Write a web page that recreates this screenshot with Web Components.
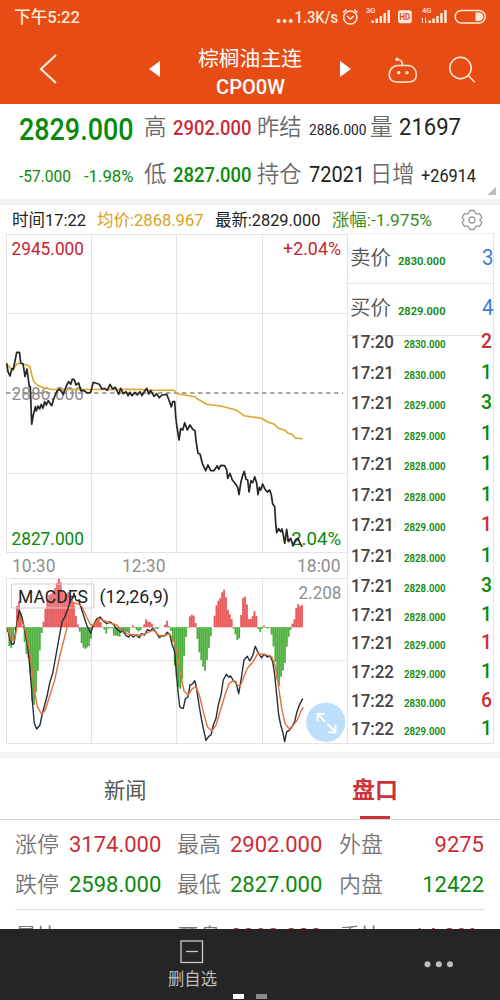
<!DOCTYPE html>
<html lang="zh-CN">
<head>
<meta charset="utf-8">
<title>棕榈油主连 CPO0W</title>
<style>
  html, body { margin: 0; height: 1000px; overflow: hidden; background: #fff; }
  body {
    font-family: Roboto, "Noto Sans CJK SC", sans-serif;
    color: #222;
    --up: #cb2c36;
    --down: #0a8a0a;
    --label: #6a6a6a;
    --line: #e4e4e4;
  }
</style>
</head>
<body>

<trade-app></trade-app>

<template id="status-bar-template">
  <style>
    :host { display: flex; height: 35px; padding: 0 14px; align-items: center; justify-content: space-between; color: #ffe9d8; }
    svg { display: block; fill: none; stroke: currentColor; }
    fit-label { margin-top: 1px; }
    .solid { fill: currentColor; stroke: none; }
    text { fill: currentColor; stroke: none; font-weight: 500; }
  </style>
  <fit-label s="16.5" w="66" weight="500">下午5:22</fit-label>
  <svg width="212" height="35" viewBox="274 0 212 35">
    <g class="solid">
      <circle cx="278.5" cy="21" r="2"/><circle cx="284.6" cy="21" r="2"/><circle cx="290.7" cy="21" r="2"/>
    </g>
    <text x="294.5" y="22.5" font-size="16" textLength="43.5" lengthAdjust="spacingAndGlyphs">1.3K/s</text>
    <g stroke-width="1.5">
      <circle cx="350.3" cy="17.5" r="6.6"/>
      <path d="M343 12.5l3.4-2.8M357.6 12.5l-3.4-2.8M347 16l3.3 3 3.6-3"/>
    </g>
    <text x="366" y="13" font-size="7.5" textLength="9.5" lengthAdjust="spacingAndGlyphs">3G</text>
    <path class="solid" d="M371.5 20.5h2.5v2.5h-2.5zM375.5 18.5h2.5v4.5h-2.5zM379.5 16h2.5v7h-2.5zM383.5 13h2.5v10h-2.5zM387.5 10h2.5v13h-2.5z"/>
    <rect class="solid" x="398" y="10.3" width="13.8" height="13" rx="2.5"/>
    <text x="399.6" y="20.2" font-size="8.8" textLength="10.5" lengthAdjust="spacingAndGlyphs" style="fill:#e64c14;font-weight:700">HD</text>
    <text x="422" y="13" font-size="7.5" textLength="9.5" lengthAdjust="spacingAndGlyphs">4G</text>
    <path d="M422.5 23v-5l-1 1.2M425.5 17.5v5l1-1.2" stroke-width="1"/>
    <path class="solid" d="M428.5 20.5h2.5v2.5h-2.5zM432.3 18.5h2.5v4.5h-2.5zM436.2 16h2.5v7h-2.5zM440.2 13h2.5v10h-2.5zM444.2 10h2.5v13h-2.5z"/>
    <rect x="455.2" y="10.5" width="30" height="12.5" rx="6.2" stroke-width="1.5"/>
    <path class="solid" d="M475.5 12.5h3.5a4.2 4.2 0 0 1 0 8.5h-3.5z"/>
  </svg>
</template>

<template id="title-bar-template">
  <style>
    :host { display: grid; grid-template-columns: 140px 220px 140px; height: 68.5px; color: #fff; }
    svg { display: block; fill: none; stroke: #ffeadb; }
    .title { display: flex; justify-content: space-between; align-items: center; padding: 0 9px; }
    .name { display: flex; flex-direction: column; align-items: center; gap: 7.5px; margin-top: 7.5px; }
    .tri { fill: #fff; stroke: none; }
  </style>
  <svg width="140" height="68" viewBox="0 35 140 68"><path d="M56 55L41 69l15 14" stroke-width="2.2"/></svg>
  <div class="title">
    <svg width="11" height="16" viewBox="0 0 11 16"><path class="tri" d="M0 8L11 0v16z"/></svg>
    <div class="name">
      <fit-label s="20.8" w="104">棕榈油主连</fit-label>
      <fit-label s="20" w="69" weight="500">CPO0W</fit-label>
    </div>
    <svg width="11" height="16" viewBox="0 0 11 16"><path class="tri" d="M11 8L0 0v16z"/></svg>
  </div>
  <svg width="140" height="68" viewBox="360 35 140 68" stroke-width="1.5">
    <path d="M398 65.5h10c5 0 8.3 4 8.3 9 0 4.5-2 7-6 7.3-5 .5-10 .5-15 0-4-.3-6-2.8-6-7.3 0-5 3.7-9 8.7-9zM402.5 65.5c0-3.500-1.500-6-5-6"/>
    <g fill="#ffeadb" stroke="none">
      <circle cx="397" cy="59.3" r="1.7"/>
      <circle cx="398.7" cy="72.8" r="1.7"/>
      <circle cx="407" cy="72.8" r="1.7"/>
    </g>
    <circle cx="460.5" cy="68" r="10.7"/><path d="M468.3 75.5l6.5 6.7"/>
  </svg>
</template>

<template id="quote-panel-template">
  <style>
    :host { display: flex; position: relative; height: 101.5px; border-bottom: 6px solid #f3f3f3; padding-left: 19px; }
    .last { width: 125px; color: var(--down); padding-top: 11.5px; }
    .change { display: flex; margin-top: 22px; }
    .row { display: flex; align-items: baseline; height: 46.7px; }
    .rows { padding-top: 12.8px; }
    .key { color: var(--label); }
    .up { color: var(--up); }
    .down { color: var(--down); }
    .corner { position: absolute; right: 4px; bottom: 4px; width: 9px; height: 8px; background: #bdbdbd; clip-path: polygon(100% 0, 100% 100%, 0 100%); }
  </style>
  <div class="last">
    <fit-label s="30.5" w="114.5" weight="500">2829.000</fit-label>
    <div class="change">
      <fit-label s="16.8" w="52">-57.000</fit-label>
      <fit-label s="16.8" w="49.5" gap="13">-1.98%</fit-label>
    </div>
  </div>
  <div class="rows">
    <div class="row">
      <fit-label class="key" s="22.5" w="22.5" weight="350">高</fit-label>
      <fit-label class="up" s="20" w="78.5" gap="6.5" weight="500">2902.000</fit-label>
      <fit-label class="key" s="22.5" w="44.5" gap="5.5" weight="350">昨结</fit-label>
      <fit-label s="14.8" w="57.5" gap="7">2886.000</fit-label>
      <fit-label class="key" s="22.5" w="22.5" gap="3.5" weight="350">量</fit-label>
      <fit-label s="23" w="62" gap="7">21697</fit-label>
    </div>
    <div class="row">
      <fit-label class="key" s="22.5" w="22.5" weight="350">低</fit-label>
      <fit-label class="down" s="20" w="78.5" gap="6.5" weight="500">2827.000</fit-label>
      <fit-label class="key" s="22.5" w="44.5" gap="5.5" weight="350">持仓</fit-label>
      <fit-label s="22" w="56" gap="7">72021</fit-label>
      <fit-label class="key" s="22.5" w="44.5" gap="5" weight="350">日增</fit-label>
      <fit-label s="17.8" w="55" gap="7">+26914</fit-label>
    </div>
  </div>
  <i class="corner"></i>
</template>

<template id="info-line-template">
  <style>
    :host { display: flex; height: 28px; padding: 7px 0 0 12px; align-items: baseline; }
    .avg { color: #d9a21b; }
    .pct { color: #3c8c28; }
    svg { flex: none; align-self: flex-start; margin: -4px 0 0 28px; fill: none; stroke: #9a9a9a; stroke-width: 1.3; }
  </style>
  <fit-label s="16.8" w="74">时间17:22</fit-label>
  <fit-label class="avg" s="16.8" w="106.5" gap="11">均价:2868.967</fit-label>
  <fit-label s="16.8" w="105.5" gap="11.5">最新:2829.000</fit-label>
  <fit-label class="pct" s="16.8" w="100" gap="11.5">涨幅:-1.975%</fit-label>
  <svg width="24" height="24" viewBox="-12 -12 24 24">
    <path stroke-linejoin="round" d="M-2.3-9.5h4.6l.8 2.5 2 1.2 2.6-.6 2.3 4-1.8 1.9v1l1.8 1.9-2.3 4-2.6-.6-2 1.2-.8 2.5h-4.6l-.8-2.5-2-1.2-2.6.6-2.3-4 1.8-1.9v-1l-1.8-1.9 2.3-4 2.6.6 2-1.2z"/>
    <circle r="3"/>
  </svg>
</template>

<template id="price-chart-template">
  <style>
    :host { display: block; width: 347px; height: 519px; }
    svg { display: block; }
    text { font-size: 17.5px; }
    .grid { stroke: var(--line); fill: none; }
    .axis { fill: #8f8f8f; }
    polyline { fill: none; stroke-linejoin: round; }
  </style>
  <svg width="347" height="519" viewBox="0 233 347 519">
    <path class="grid" d="M6.5 234v318.5M91.5 234v318.5M176.5 234v318.5M262.5 234v318.5M6 234.5h341M6 313.5h341M6 473.5h341M6 552.5h341M6.5 578v166M91.5 578v166M176.5 578v166M262.5 578v166M6 578.5h341M6 660.5h341M6 743.5h341"/>
    <text x="11.5" y="255" textLength="72.5" lengthAdjust="spacingAndGlyphs" fill="#c8232f">2945.000</text>
    <text x="283" y="255" textLength="58" lengthAdjust="spacingAndGlyphs" fill="#c8232f">+2.04%</text>
    <text class="axis" x="11.5" y="399.5" textLength="72.5" lengthAdjust="spacingAndGlyphs">2886.000</text>
    <text x="11.5" y="544.5" textLength="72.5" lengthAdjust="spacingAndGlyphs" fill="#0a8a0a">2827.000</text>
    <text x="286" y="544.5" textLength="55" lengthAdjust="spacingAndGlyphs" fill="#0a8a0a">-2.04%</text>
    <text class="axis" x="12" y="571.5" textLength="43.5" lengthAdjust="spacingAndGlyphs">10:30</text>
    <text class="axis" x="122" y="571.5" textLength="43.5" lengthAdjust="spacingAndGlyphs">12:30</text>
    <text class="axis" x="297" y="571.5" textLength="43.5" lengthAdjust="spacingAndGlyphs">18:00</text>
    <text class="axis" x="298.5" y="599" textLength="43" lengthAdjust="spacingAndGlyphs">2.208</text>
    <path d="M6 393H343" stroke="#8a8a8a" stroke-width="1.3" stroke-dasharray="4.5 3.5"/>
    <polyline id="avg" stroke="#d9a92b" stroke-width="1.6"/>
    <polyline id="price" stroke="#262626" stroke-width="1.7"/>
    <path id="redFill" fill="#f08a8a"/>
    <path id="greenFill" fill="#8fd083"/>
    <path id="red" stroke="#e8595c" stroke-width="1.45"/>
    <path id="green" stroke="#4bad3b" stroke-width="1.45"/>
    <rect x="11.5" y="584" width="82.5" height="24" rx="2" fill="#fff" fill-opacity=".12" stroke="#d2d2d2" stroke-width="1.2"/>
    <text x="18" y="603" textLength="70" lengthAdjust="spacingAndGlyphs" fill="#222">MACDFS</text>
    <text x="99.5" y="603" textLength="69.5" lengthAdjust="spacingAndGlyphs" fill="#222">(12,26,9)</text>
    <polyline id="dif" stroke="#23303a" stroke-width="1.4"/>
    <polyline id="dea" stroke="#e2703c" stroke-width="1.4"/>
    <circle cx="325.8" cy="722.3" r="19.7" fill="#b9ddfb" fill-opacity=".93"/>
    <path d="M325 721.5l-7.5-7.5M317.5 721v-7h7.5M327.5 724l8 8M335.5 725v7.2h-7.5" fill="none" stroke="#fff" stroke-width="1.9"/>
  </svg>
</template>

<template id="trade-list-template">
  <style>
    :host { display: block; width: 147px; height: 511px; border: 1px solid var(--line); border-top-color: #eee; }
    .quote { display: flex; align-items: baseline; height: 50px; padding: 12.5px 0 0 2px; border-bottom: 1px solid var(--line); }
    .quote + .quote { height: 52px; }
    .quote .key { color: #555; }
    .trade { display: flex; align-items: baseline; height: 30.5px; padding: 0 1px 0 2.5px; }
    .quote + .trade { margin-top: -4.8px; }
    .late { height: 28.6px; }
    .time { color: #444; }
    .price, .down { color: #0b8a0b; }
    .vol { margin-left: auto; }
    .blue { color: #3d7fd6; }
    .up { color: var(--up); }
  </style>
  <div id="rows"></div>
</template>

<template id="tab-bar-template">
  <style>
    :host { display: grid; grid-template-columns: 1fr 1fr; height: 68px; border-top: 6px solid #f3f3f3; border-bottom: 1px solid #d6d6d6; }
    div { display: flex; flex-direction: column; align-items: center; }
    .news { color: #555; padding-top: 21.5px; }
    .book { color: #cc3338; padding-top: 20.5px; }
    i { width: 30px; height: 3px; background: #cc3338; margin-top: auto; }
  </style>
  <div class="news"><fit-label s="21.5" w="42.5">新闻</fit-label></div>
  <div class="book"><fit-label s="23" w="46" weight="700">盘口</fit-label><i></i></div>
</template>

<template id="stats-grid-template">
  <style>
    :host { display: block; height: 108.7px; overflow: hidden; padding: 5px 15px 0; }
    .row { display: grid; grid-template-columns: 54px 108px 53px 109px 54px 1fr; height: 40.3px; align-items: center; font-size: 22px; line-height: 26px; }
    .row span:nth-child(odd) { color: #757575; font-weight: 350; }
    .row span:last-child { text-align: right; margin-right: 1px; }
    .row:last-child { margin-top: 3px; border-top: 1px solid #dcdcdc; height: 55px; }
    .up { color: var(--up); }
    .down { color: var(--down); }
  </style>
  <div class="row"><span>涨停</span><span class="up">3174.000</span><span>最高</span><span class="up">2902.000</span><span>外盘</span><span class="up">9275</span></div>
  <div class="row"><span>跌停</span><span class="down">2598.000</span><span>最低</span><span class="down">2827.000</span><span>内盘</span><span class="down">12422</span></div>
  <div class="row"><span>量比</span><span></span><span>开盘</span><span class="up">2898.000</span><span>委比</span><span class="up">14.29%</span></div>
</template>

<template id="bottom-bar-template">
  <style>
    :host { display: grid; grid-template-columns: 384px 1fr; height: 71.3px; background: #252525; color: #bdbdbd; position: relative; }
    .remove { display: flex; flex-direction: column; align-items: center; padding-top: 11px; gap: 8px; }
    svg { display: block; }
    .pager { position: absolute; left: 233px; bottom: 1px; display: flex; gap: 12px; }
    .pager i { width: 11px; height: 5px; background: #8a8a8a; }
    .pager i:first-child { background: #fff; }
  </style>
  <div class="remove">
    <svg width="24" height="24" fill="none" stroke="#c9c9c9" stroke-width="1.3"><rect x="1" y="1" width="21.5" height="21.5"/><path d="M6 11.5h12"/></svg>
    <fit-label s="16.5" w="49">删自选</fit-label>
  </div>
  <svg width="116" height="71" fill="#bdbdbd"><circle cx="43.5" cy="35.2" r="3"/><circle cx="54.8" cy="35.2" r="3"/><circle cx="66" cy="35.2" r="3"/></svg>
  <div class="pager"><i></i><i></i></div>
</template>

<template id="trade-app-template">
  <style>
    :host { display: flex; flex-direction: column; width: 500px; height: 1000px; background: #fff; }
    header { background: #e64c14; }
    .market { display: flex; height: 519px; }
  </style>
  <header>
    <status-bar></status-bar>
    <title-bar></title-bar>
  </header>
  <quote-panel></quote-panel>
  <info-line></info-line>
  <div class="market">
    <price-chart></price-chart>
    <trade-list></trade-list>
  </div>
  <tab-bar></tab-bar>
  <stats-grid></stats-grid>
  <bottom-bar></bottom-bar>
</template>

<script>
  (function (document, window) {

    class TemplateElement extends HTMLElement {
      connectedCallback() {
        if (this.shadowRoot) {
          return;
        }
        const template = document.querySelector(`#${this.localName}-template`);
        const shadowRoot = this.attachShadow({ mode: 'open' });
        shadowRoot.innerHTML = '<style>:host, * { box-sizing: border-box; } :host { flex: none; }</style>';
        shadowRoot.appendChild(document.importNode(template.content, true));
        this.render(shadowRoot);
      }

      render() {}
    }

    // One line of text squeezed to a given width: s = font size, w = width, gap = left margin
    class FitLabel extends HTMLElement {
      connectedCallback() {
        if (this.shadowRoot) {
          return;
        }
        const size = this.getAttribute('s');
        const width = this.getAttribute('w');
        const shadowRoot = this.attachShadow({ mode: 'open' });
        shadowRoot.innerHTML = `
          <style>
            :host {
              display: inline-block; flex: none; white-space: nowrap;
              width: ${width}px; margin-left: ${this.getAttribute('gap') || 0}px;
              font-size: ${size}px; line-height: ${size}px;
              font-weight: ${this.getAttribute('weight') || 400};
            }
            span { display: inline-block; transform-origin: 0 0; }
          </style>
          <span><slot></slot></span>`;
        const span = shadowRoot.querySelector('span');
        const natural = span.getBoundingClientRect().width;
        if (natural) {
          span.style.transform = `scaleX(${width / natural})`;
        }
      }
    }

    const price = '6.7,363.3 8,371.7 10,376 12,368.5 13.3,369.5 16.7,352.3 19.5,352.3 20.7,363 23,363.7 25,376.5 27,369 29.3,386.7 30.3,386.7 31.7,424.3 33.3,415 35.3,406.7 36.3,411 38,406 39.7,409 41.3,404.3 43,408.3 44.7,401.7 46.3,405 48.3,400.7 51.7,405.7 54,398.3 56.7,391.7 59.3,389 63.3,394.3 66.7,385 68.7,381.7 70.7,384.3 72.3,379 74.3,379.7 76,385 78.7,383 81,391 83.3,390.3 87.3,393 90.7,392.3 93.3,382.3 99.3,384.3 102,389 104.7,388.3 107.3,390.3 110,384.3 112.7,389 115.3,387.3 118.7,394.3 120.7,388.3 123.3,393.7 126,391.7 128,395.7 130,392.3 132,395.7 134.7,392.3 137.3,395 140,391.7 142,395.7 144.7,391 146.7,388.3 148.7,394 150.7,390.3 154,396.3 156.7,393.7 159.3,397.7 162,395 166.7,394.3 169.3,401 171.3,407 172.7,401.7 174.7,401.7 175.7,416.7 176.7,425 179,440 180.7,428.7 182.7,430 184.7,422.7 187.3,430 190,425 192.7,429.3 195,430.7 196,440.7 198,453.3 200,454 202.3,463.3 205.7,470.7 208,465 210.7,470.7 214,470.7 217.3,465.7 218.7,469.3 220.7,465.3 224.7,465.7 226.7,470 227.7,478.3 230,473.3 232.3,480 235,483.3 237.7,487.3 239,494.7 241,481.7 242.7,475.3 244.3,471.3 246,479.3 247.7,480 249,492 251,480.7 252.7,482.7 254.7,476.7 256.7,483.3 258,494.7 259.3,487.3 260.7,490 262.7,484 264.7,488.7 267.3,492 269.7,490 271.3,494.7 272.7,504 274.7,506.7 275.7,523.3 276.7,532.7 278.7,528.7 280.7,531.7 282,529 283.3,535 284.7,543.3 286.7,529.3 288.3,541.7 290.7,538.3 293,546 295.3,540 298,538.3 300,543.3 302.3,546.7';

    const average = '6.7,363.5 10,367.5 12,369.5 14,368 17,364 20,363.5 27,365 30,367 32,376 34,382 38,385.5 44,388 52,389.5 91,389.5 141,389.3 145,390.3 174,390.3 178,394 195,396.7 198,399.3 206.7,404.3 221.7,406.3 236.7,410.3 244,415.7 261.7,418.3 267.3,421.7 274.3,424.3 278.3,428.3 285,430.3 288.3,433.3 291.7,434 295.3,438 302.7,438.7';

    const dif = '7.3,627.7 9.3,636.7 11.7,644.3 14,643.7 16,628.3 19.3,610.3 22,617 24.3,628.3 26.7,640 28.7,655 30.7,678.3 32.7,705 34.3,723.3 36.7,729 40,725 42,715 44.7,705 47.3,695 50,681.7 52.7,673.3 56,655 58.7,640 62,622 65,616.7 68,608.3 70.7,600 72.7,598.3 74,593.3 76,600 78.7,601 81.3,608.3 84,616.7 86.7,625 90.7,633.3 93.3,625 96.7,619 100,617 103.3,621 106.7,623.7 110,621.7 113.3,624.3 116.7,629 120.7,632.3 123.3,630.3 126,635.7 128.7,637 130.7,634.3 133.3,637 136,635 139.3,637.7 141.3,633.7 144.7,635 147.3,629.7 150,631 152.7,628.3 156,632.3 159.3,637.7 162,635.7 164.7,635.7 167.3,632.3 170,635 172,644.3 174.7,651.7 176,668.3 178,691.7 179.7,706.7 181.7,708.3 183.3,708.3 185.3,699 188,696.7 190,685 192,684.3 194.7,680.7 196.3,686.7 198,698.3 200.7,715 203.3,728.3 206,740.3 208.7,736.3 211,735 213.3,725 216,718.3 218.3,705 221,695 223.3,680 226.3,674.3 228.7,677 230.7,676 233.3,680.7 236,682.3 238.7,693.7 241.3,678.3 244,660 247.3,656.3 249.7,661 252.7,655.7 255.3,646.3 257.3,651 260,655.7 261.7,657.7 264,654.3 267.3,657 270,656 272.7,661.7 274.7,675 276.7,695 278.7,715 280.7,725 282.7,731.7 284.7,741.7 286.7,731.7 289.3,730.3 292,726.7 294.7,721.7 297,711.7 299.7,704.3 302.7,698.7';

    const dea = '7.3,627 11.3,640 14.7,640 18,621 20.7,617.7 26,632.3 30.7,658.3 34.7,691.7 37.3,706.7 41.7,714.3 45.3,710 50,695 54.7,680 60,655 66,631.7 70.7,613.3 74,602.3 78.7,604.3 82,606.7 86,615.7 90.7,625 94,625 98.7,618.3 103.3,620.3 110,623 116.7,625 121.7,629.7 128.3,634.3 135,635 141.7,635 148.3,632.3 153.3,630 158.3,635 163.3,636.3 169.3,633.7 174,640 177.3,655 180.7,675 184,691 188,695 192,689 196,686.7 199.3,695 203.3,711.7 207.3,726.7 212,731 216,725 220,711.7 225,695 229.3,683.3 233.3,680.7 236.7,684.3 240,686.7 242.7,680 247.3,668.3 252.7,662.3 257.3,654.3 265,654.3 271.7,656.7 275,665 278.3,685 281.7,708.3 285,723.3 289.3,729 293.3,725 297.3,720 300.7,711.7 303.3,707';

    // Histogram outline: x and height over (or under) the zero line
    const histogram = [
      [7, 0], [8.3, -12], [10.3, -24], [12, -18], [14, -10], [15.5, 0], [16.5, 17], [18, 30], [20, 22], [22, 2], [23.5, 0],
      [24.3, -12], [25.7, -25], [28.3, -30], [30, -42], [32.3, -75], [34, -78], [36, -65], [37.3, -50], [39.3, -28], [41.3, -8], [42.7, 0],
      [44, 8], [46, 22], [48.7, 32], [52, 34], [54, 36], [56.7, 44], [59, 49], [61, 44], [62.7, 36], [65, 32], [68.3, 35], [70.7, 33], [73.3, 26], [75.3, 14], [78, 2],
      [79, 0], [80, -6], [82, -18], [84.7, -22], [87.3, -20], [90, -18], [92, -6], [93, 1], [96, 8], [98.7, 9], [101.3, 4], [102.7, 0],
      [104, -1], [106, -7], [108.3, -1], [113, -1], [114, -9], [116.7, -8], [119.3, -10], [121.3, -4], [124, -7], [126.7, -4], [129.3, -6], [130.7, 0],
      [132.7, 2], [134, 0], [138.3, -4], [140, -4], [142, 0], [144, 2], [146.7, 9], [148.7, 4], [150.7, 6], [152.7, 2], [154, 0], [156.7, -2], [160, 0],
      [164, 0], [167.3, 7], [169.3, 0], [171, -4], [173, -16], [175, -42], [177, -52], [179.3, -64], [181.7, -58], [183.3, -40], [185.3, -15], [187.3, -2],
      [188.5, 0], [189, 9], [191, 13], [192.7, 12], [195, 11], [196, 0], [196.7, -2], [198, -18], [200, -28], [202.7, -38], [204.7, -44], [206, -42], [207.3, -30], [209.3, -18], [211.3, -6], [212.7, 0],
      [214, 8], [216, 20], [217.7, 26], [220, 28], [221.7, 34], [224, 38], [226, 30], [227.7, 18], [229.3, 14], [231.3, 10], [233.3, 0],
      [234.7, -5], [236.7, -10], [238.7, -17], [240, -4], [240.7, 6], [242, 22], [244, 35], [246, 26], [247.7, 20], [249, 6], [251.3, 9], [253.3, 12], [255.7, 20], [257, 4], [257.7, 0],
      [258.7, -3], [260.7, -5], [262.7, 0], [263.7, 2], [265.3, 0], [267.3, -2], [268.7, 0], [270.7, -1], [272, -10], [274, -22], [276, -40], [278.3, -62], [280, -56], [282, -44], [284.3, -42], [286, -24], [288, -12], [290.7, -2],
      [292, 3], [294, 5], [295.3, 14], [297.3, 24], [300, 21], [302, 22], [303.7, 18]
    ];

    class PriceChart extends TemplateElement {
      render(root) {
        root.querySelector('#price').setAttribute('points', price);
        root.querySelector('#avg').setAttribute('points', average);
        root.querySelector('#dif').setAttribute('points', dif);
        root.querySelector('#dea').setAttribute('points', dea);

        const zero = 627.3;
        const bars = { red: '', green: '' };
        const fills = { red: '', green: '' };
        for (let x = 7.5; x < 303.5; x += 1.9) {
          const h = this.heightAt(x);
          const key = h > 0 ? 'red' : 'green';
          bars[key] += `M${x.toFixed(1)} ${zero}v${(-h).toFixed(1)}`;
          fills[key] += `M${(x - 1).toFixed(1)} ${zero}h1.9v${(-h).toFixed(1)}h-1.9z`;
        }
        root.querySelector('#red').setAttribute('d', bars.red);
        root.querySelector('#green').setAttribute('d', bars.green);
        root.querySelector('#redFill').setAttribute('d', fills.red);
        root.querySelector('#greenFill').setAttribute('d', fills.green);
      }

      heightAt(x) {
        const i = histogram.findIndex((point) => point[0] >= x);
        const [x0, h0] = histogram[i - 1];
        const [x1, h1] = histogram[i];
        return h0 + (h1 - h0) * (x - x0) / (x1 - x0);
      }
    }

    const trades = [
      ['17:20', 2830, 2, 'up'], ['17:21', 2830, 1, 'down'], ['17:21', 2829, 3, 'down'],
      ['17:21', 2829, 1, 'down'], ['17:21', 2828, 1, 'down'], ['17:21', 2828, 1, 'down'],
      ['17:21', 2829, 1, 'up'], ['17:21', 2828, 1, 'down'], ['17:21', 2828, 3, 'down'],
      ['17:21', 2828, 1, 'down'], ['17:21', 2829, 1, 'up'], ['17:22', 2829, 1, 'down'],
      ['17:22', 2830, 6, 'up'], ['17:22', 2829, 1, 'down']
    ];

    class TradeList extends TemplateElement {
      render(root) {
        const quote = (name, value, volume) => `
          <div class="quote">
            <fit-label class="key" s="20.5" w="41" weight="350">${name}</fit-label>
            <fit-label class="price" s="11.5" w="47.5" gap="7" weight="600">${value}</fit-label>
            <div class="vol"><fit-label class="blue" s="21.5" w="11.5">${volume}</fit-label></div>
          </div>`;
        let html = quote('卖价', '2830.000', 3) + quote('买价', '2829.000', 4);
        trades.forEach(([time, value, volume, side], i) => {
          html += `<div class="trade ${i > 7 ? 'late' : ''}">
              <fit-label class="time" s="19" w="43" weight="500">${time}</fit-label>
              <fit-label class="price" s="11" w="41.5" gap="10.5" weight="600">${value}.000</fit-label>
              <div class="vol"><fit-label class="${side}" s="20" w="11" weight="500">${volume}</fit-label></div>
            </div>`;
        });
        root.querySelector('#rows').innerHTML = html;
      }
    }

    window.customElements.define('fit-label', FitLabel);
    window.customElements.define('price-chart', PriceChart);
    window.customElements.define('trade-list', TradeList);
    ['status-bar', 'title-bar', 'quote-panel', 'info-line', 'tab-bar', 'stats-grid', 'bottom-bar', 'trade-app'].forEach((name) => {
      window.customElements.define(name, class extends TemplateElement {});
    });

  })(document, window);
</script>
</body>
</html>
